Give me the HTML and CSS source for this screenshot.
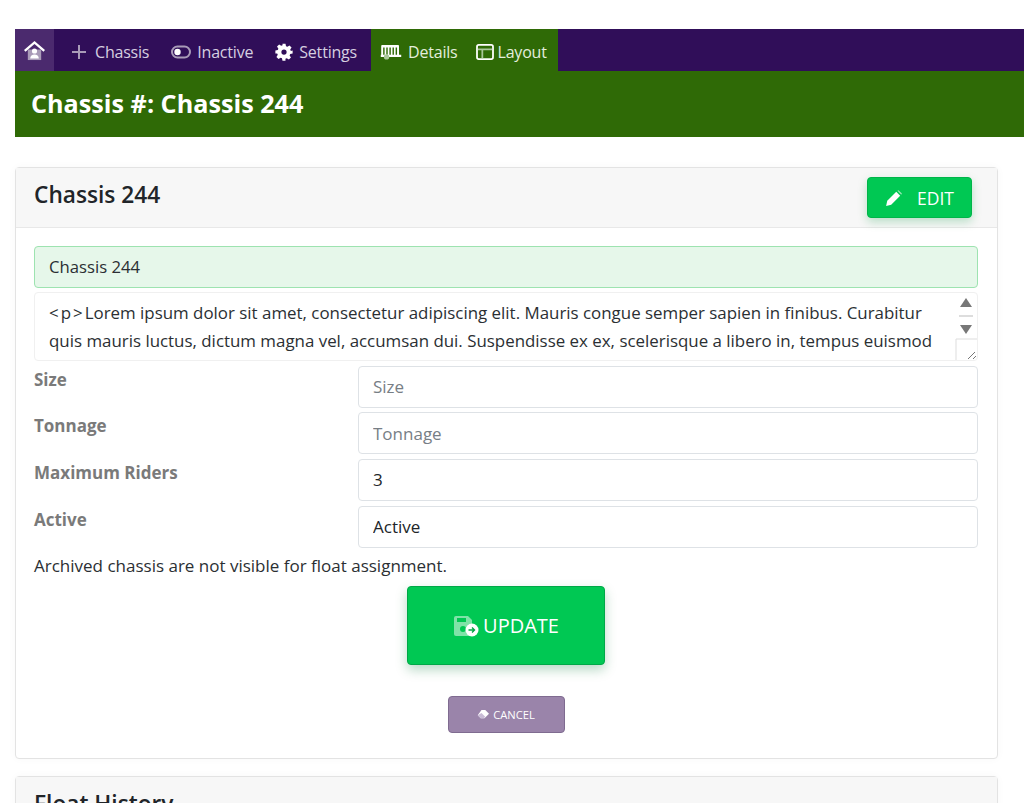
FILE: index.html
```html
<!DOCTYPE html>
<html lang="en">
<head>
<meta charset="utf-8">
<title>Chassis 244</title>
<link rel="stylesheet" href="styles.css">
</head>
<body>
<nav class="topnav">
  <a class="nav-item home"><svg class="ic" viewBox="0 0 24 22" width="23" height="21"><path d="M5 10h14v11H5z" fill="#a99bb8"/><path d="M12 1 1 10.500l1.600 1.800L12 4.300l9.400 8 1.600-1.800z" fill="#fff"/><circle cx="12" cy="11.500" r="2.700" fill="#fff"/><path d="M7.500 19.500c0-2.800 2-4.200 4.500-4.200s4.500 1.400 4.500 4.200z" fill="#fff"/></svg></a>
  <a class="nav-item first"><svg class="ic plus" viewBox="0 0 16 16" width="16" height="16"><path d="M8 1v14M1 8h14" stroke="#a99bb8" stroke-width="2"/></svg><span>Chassis</span></a>
  <a class="nav-item"><svg class="ic" viewBox="0 0 20 14" width="20" height="14"><rect x="1" y="1.500" width="18" height="11" rx="5.500" fill="none" stroke="#a99bb8" stroke-width="2"/><circle cx="6.500" cy="7" r="3.200" fill="#fff"/></svg><span>Inactive</span></a>
  <a class="nav-item"><svg class="ic" viewBox="0 0 24 24" width="18" height="18"><path d="M12 8.500a3.500 3.500 0 1 0 0 7 3.500 3.500 0 0 0 0-7zM10 1h4l.7 3.200 1.800.8 2.800-1.800 2.800 2.800-1.800 2.800.8 1.800L23.500 10v4l-3.200.7-.8 1.800 1.800 2.800-2.800 2.800-2.800-1.800-1.800.8L14 23.500h-4l-.7-3.200-1.800-.8-2.800 1.800-2.800-2.800 1.800-2.800-.8-1.800L.5 14v-4l3.200-.7.8-1.800L2.700 4.700l2.800-2.800 2.800 1.800 1.800-.8z" fill="#fff" fill-rule="evenodd"/></svg><span>Settings</span></a>
  <div class="nav-group">
    <a class="nav-item"><svg class="ic" viewBox="0 0 24 18" width="22" height="16"><path d="M2 1h18a1 1 0 0 1 1 1v10h2.500v2.500H.5V12H1V2a1 1 0 0 1 1-1z" fill="#fff"/><path d="M4 4v8M7.500 4v8M11 4v8M14.500 4v8M18 4v8" stroke="#2f6a06" stroke-width="1.600"/><circle cx="7" cy="14.500" r="3" fill="#a9c79a"/></svg><span>Details</span></a>
    <a class="nav-item tight"><svg class="ic" viewBox="0 0 20 18" width="18" height="16"><rect x="1" y="1" width="18" height="16" rx="2" fill="none" stroke="#fff" stroke-width="2"/><path d="M2 6h16M7 6v10" stroke="#a9c79a" stroke-width="2"/></svg><span>Layout</span></a>
  </div>
</nav>
<header class="title-bar"><h1>Chassis #: Chassis 244</h1></header>
<main class="content">
  <section class="card">
    <div class="card-head">
      <h2>Chassis 244</h2>
      <button class="btn btn-edit"><svg viewBox="0 0 16 16" width="18" height="18"><path d="M1 15l1-4.500L10 2.500l3.500 3.500L5.500 14z" fill="#fff"/><path d="M11 1.500l1-.5 3 3-.5 1z" fill="#9ce8b8"/></svg><span>EDIT</span></button>
    </div>
    <div class="card-body">
      <div class="field-valid">Chassis 244</div>
      <div class="area">
        <div class="area-text"><span class="tag">&lt;p&gt;</span>Lorem ipsum dolor sit amet, consectetur adipiscing elit. Mauris congue semper sapien in finibus. Curabitur quis mauris luctus, dictum magna vel, accumsan dui. Suspendisse ex ex, scelerisque a libero in, tempus euismod</div>
        <div class="area-bar">
          <svg viewBox="0 0 22 68" width="22" height="68"><path d="M11 5l6 9H5z" fill="#777"/><path d="M4 23h14" stroke="#bbb"/><path d="M5 32h12l-6 9z" fill="#777"/><path d="M1 68V46h21" fill="none" stroke="#ddd"/><path d="M13 66l7-7M18 66l3-3" stroke="#777"/></svg>
        </div>
      </div>
      <div class="row"><label>Size</label><input class="input" placeholder="Size"></div>
      <div class="row"><label>Tonnage</label><input class="input" placeholder="Tonnage"></div>
      <div class="row"><label>Maximum Riders</label><input class="input" value="3"></div>
      <div class="row"><label>Active</label><input class="input" value="Active"></div>
      <p class="note">Archived chassis are not visible for float assignment.</p>
      <div class="actions">
        <button class="btn btn-update"><svg viewBox="0 0 26 22" width="26" height="22"><path d="M1 3a2 2 0 0 1 2-2h12l4 4v14a2 2 0 0 1-2 2H3a2 2 0 0 1-2-2z" fill="#7fe3a8"/><path d="M4 3h9v4H4z" fill="#00c853"/><circle cx="10" cy="14" r="3" fill="#00c853"/><circle cx="19" cy="15" r="6.500" fill="#fff"/><path d="M15.500 15h6M19 12.500l2.500 2.500-2.500 2.500" fill="none" stroke="#00a544" stroke-width="1.400"/></svg><span>UPDATE</span></button>
        <button class="btn btn-cancel"><svg viewBox="0 0 16 14" width="12" height="11"><path d="M6 1h5l5 5-6 6H5L1 8z" fill="#fff"/><path d="M1 8l4 4h4l2-2-5-5z" fill="#c9bcd6"/></svg><span>CANCEL</span></button>
      </div>
    </div>
  </section>
  <section class="card card-next">
    <div class="card-head"><h2>Float History</h2></div>
  </section>
</main>
</body>
</html>
```
FILE: styles.css
```css
* { box-sizing: border-box; }
html, body { height: 100%; overflow: hidden; }
body {
  margin: 0;
  padding: 29px 26px 0 15px;
  background: #fff;
  color: #2b2f33;
  font-family: "Open Sans", "Noto Sans", sans-serif;
  font-size: 17px;
}
.topnav {
  display: flex;
  height: 42px;
  margin-right: -26px;
  background: #300e59;
  color: #fff;
}
.nav-item {
  display: flex;
  align-items: center;
  gap: 6px;
  padding: 4px 11px 0;
  height: 42px;
  color: #d6cfe0;
  font-size: 16px;
  letter-spacing: -0.2px;
}
.nav-item .plus { margin-right: 2px; }
.nav-item.home {
  width: 39px;
  padding: 0;
  justify-content: center;
  background: #4b2a6e;
}
.nav-item.first { padding-left: 17px; }
.nav-group { display: flex; margin-left: 3px; background: #2f6a06; }
.nav-group .nav-item { color: #e4eedd; padding-left: 9px; padding-right: 9px; }
.nav-group .tight { gap: 4px; padding-right: 11px; }
.title-bar {
  height: 66px;
  margin-right: -26px;
  padding: 0 16px;
  display: flex;
  align-items: center;
  background: #2f6a06;
  color: #fff;
}
.title-bar h1 { margin: 0 0 2px; font-size: 25.200px; font-weight: 700; }
.content { padding-top: 30px; }
.card {
  border: 1px solid #e3e3e3;
  border-radius: 4px;
  background: #fff;
  box-shadow: 0 0 8px rgba(0,0,0,.03);
}
.card-head {
  display: flex;
  align-items: center;
  justify-content: space-between;
  height: 60px;
  padding: 0 25px 0 18px;
  background: #f7f7f7;
  border-bottom: 1px solid #e8e8e8;
}
.card-head h2 { margin: 0 0 6px; font-size: 22.700px; font-weight: 600; color: #212529; }
.card-body { padding: 18px 19px 25px 18px; }
.btn {
  display: flex;
  align-items: center;
  justify-content: center;
  border-radius: 4px;
  color: #fff;
  font-family: inherit;
  cursor: pointer;
}
.btn-edit {
  width: 105px;
  height: 41px;
  gap: 14px;
  background: #00c853;
  border: 1px solid #00b549;
  font-size: 17.500px;
  box-shadow: 0 4px 10px rgba(0,150,60,.25);
}
.field-valid {
  height: 42px;
  padding: 0 14px 2px;
  display: flex;
  align-items: center;
  background: #e6f7ea;
  border: 1px solid #9de3b0;
  border-radius: 4px;
  font-size: 16.700px;
}
.area {
  display: flex;
  height: 69px;
  margin-top: 4px;
  border: 1px solid #f0f0f0;
  border-radius: 4px;
  overflow: hidden;
}
.area-text {
  flex: 1;
  padding: 6px 14px 0 14px;
  font-size: 16.900px;
  line-height: 28px;
  overflow: hidden;
}
.tag { letter-spacing: 2px; }
.area-bar { width: 22px; flex: none; }
.row {
  display: flex;
  align-items: flex-start;
  height: 42px;
  margin-top: 4.670px;
}
.row label {
  width: 324px;
  flex: none;
  font-weight: 700;
  font-size: 17px;
  line-height: 27px;
  color: #7a7a7a;
}
.input {
  flex: 1;
  height: 42px;
  min-width: 0;
  padding: 0 14px;
  border: 1px solid #dee2e6;
  border-radius: 4px;
  color: #212529;
  font: inherit;
}
.input::placeholder { color: #777e85; opacity: 1; }
.note { margin: 7px 0 0; line-height: 22px; }
.actions {
  display: flex;
  flex-direction: column;
  align-items: center;
  margin-top: 9px;
}
.btn-update {
  width: 198px;
  height: 79px;
  gap: 4px;
  padding-top: 2px;
  background: #00c853;
  border: 1px solid #00a847;
  font-size: 20px;
  box-shadow: 0 5px 12px rgba(0,120,50,.28);
}
.btn-cancel {
  width: 117px;
  height: 37px;
  margin-top: 31px;
  gap: 4px;
  background: #9a84aa;
  border: 1px solid #7f6b90;
  font-size: 11.200px;
}
.card-next { margin-top: 17px; }
```
